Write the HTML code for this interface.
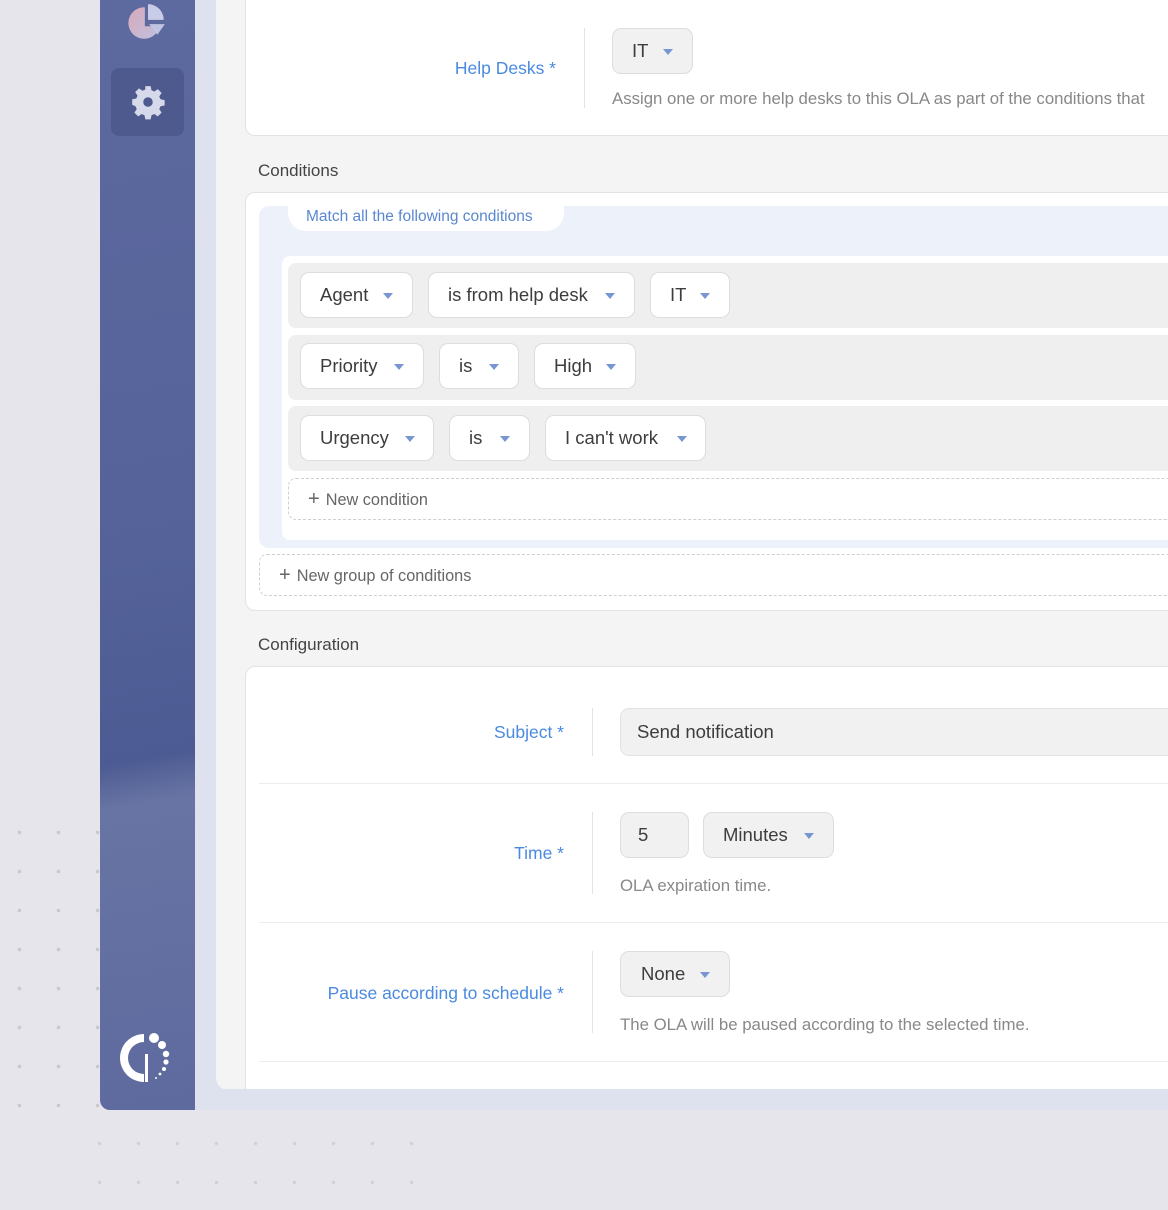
<!DOCTYPE html>
<html><head><meta charset="utf-8"><style>
*{margin:0;padding:0;box-sizing:border-box}
body{width:1168px;height:1210px;overflow:hidden;background:#e5e5eb;font-family:"Liberation Sans",sans-serif;position:relative}
.a{position:absolute}
.dots{background-image:radial-gradient(circle,#c8c8d0 1.6px,transparent 2px);background-size:39px 39px}
.side{left:100px;top:0;width:96px;height:1110px;border-bottom-left-radius:10px;background:linear-gradient(170deg,#5d6a9f 0%,#55629a 50%,#4c5b93 68%,#6874a3 72%,#5e6a9e 100%)}
.band{left:195px;top:0;width:973px;height:1110px;background:#dde2ee}
.panel{left:216px;top:0;width:952px;height:1090px;background:#f4f4f5;border-bottom-left-radius:12px}
.card{background:#fff;border:1px solid #e2e2e4;border-radius:10px;border-right:none;border-top-right-radius:0;border-bottom-right-radius:0}
.lbl{color:#4a8ae0;font-size:17.5px;text-align:right}
.desc{color:#888;font-size:16.8px;white-space:nowrap}
.vdiv{width:1px;background:#e4e4e4}
.hd{color:#444;font-size:17px}
.pill{position:absolute;height:46px;background:#fff;border:1px solid #ddd;border-radius:9px;font-size:18.5px;color:#3d3d3d;line-height:44px;white-space:nowrap}
.pill.g{background:#f1f1f1}
.pill span{position:absolute}
.car{position:absolute;top:20px;width:0;height:0;border-left:5px solid transparent;border-right:5px solid transparent;border-top:6px solid #7896d3}
.row{position:absolute;left:288px;width:880px;height:65px;background:#efefef;border-top-left-radius:8px;border-bottom-left-radius:8px}
.dot{border:1px dashed #cfcfcf;border-right:none;border-radius:8px 0 0 8px;background:#fff;color:#666;font-size:16.3px}
</style></head><body>
<div class="a dots" style="left:0;top:813px;width:120px;height:300px;background-position:0 0"></div>
<div class="a dots" style="left:80px;top:1124px;width:340px;height:80px;background-position:0 0;opacity:.7"></div>
<div class="a side"></div>
<div class="a band"></div>
<div class="a panel"></div>

<!-- sidebar icons -->
<svg class="a" style="left:127px;top:2px" width="42" height="40" viewBox="0 0 40 38">
<defs><linearGradient id="pg" x1="0" y1="0" x2="1" y2="1"><stop offset="0" stop-color="#e7b0bd"/><stop offset="1" stop-color="#c9cbe6"/></linearGradient></defs>
<path d="M17 5 A15 15 0 1 0 31 23 L17 23 Z" fill="url(#pg)" opacity=".9"/>
<path d="M20 2 A15 15 0 0 1 35 17 L20 17 Z" fill="#c8cce6"/>
<path d="M21 21 L36 21 L29 31 Z" fill="#c0c5e2"/>
</svg>
<div class="a" style="left:111px;top:68px;width:73px;height:68px;border-radius:8px;background:#4e5a8e"></div>
<svg class="a" style="left:129px;top:83px" width="38" height="38" viewBox="0 0 24 24">
<path fill="#d6d9ea" d="M10.3 2h3.4l.5 2.6 1.8.8 2.2-1.5 2.4 2.4-1.5 2.2.8 1.8 2.6.5v3.4l-2.6.5-.8 1.8 1.5 2.2-2.4 2.4-2.2-1.5-1.8.8-.5 2.6h-3.4l-.5-2.6-1.8-.8-2.2 1.5-2.4-2.4 1.5-2.2-.8-1.8L2 13.7v-3.4l2.6-.5.8-1.8-1.5-2.2 2.4-2.4 2.2 1.5 1.8-.8zM12 9a3 3 0 1 0 0 6 3 3 0 0 0 0-6z"/>
</svg>
<svg class="a" style="left:120px;top:1030px" width="56" height="56" viewBox="0 0 56 56">
<path d="M24 4 A24 24 0 0 0 24 52 L24 44 A14 14 0 0 1 24 12 Z" fill="#fff"/>
<rect x="25" y="24" width="3" height="28" fill="#fff"/>
<circle cx="34" cy="8" r="5" fill="#fff"/><circle cx="42" cy="15" r="4" fill="#fff"/>
<circle cx="46" cy="24" r="3.2" fill="#fff"/><circle cx="46" cy="32" r="2.6" fill="#fff"/>
<circle cx="44" cy="39" r="2" fill="#fff"/><circle cx="40" cy="44" r="1.4" fill="#fff"/><circle cx="36" cy="48" r="1" fill="#fff"/>
</svg>

<!-- card1 -->
<div class="a card" style="left:245px;top:-12px;width:923px;height:148px"></div>
<div class="a lbl" style="left:300px;top:58px;width:256px">Help Desks *</div>
<div class="a vdiv" style="left:584px;top:28px;height:80px"></div>
<div class="pill g" style="left:612px;top:28px;width:81px"><span style="left:19px">IT</span><i class="car" style="left:50px"></i></div>
<div class="a desc" style="left:612px;top:89px">Assign one or more help desks to this OLA as part of the conditions that</div>

<div class="a hd" style="left:258px;top:161px">Conditions</div>
<div class="a card" style="left:245px;top:192px;width:923px;height:419px"></div>
<div class="a" style="left:259px;top:206px;width:909px;height:342px;background:#edf1f9;border-radius:10px 0 0 10px"></div>
<div class="a" style="left:288px;top:200px;width:276px;height:31px;background:#fff;border-radius:0 0 18px 18px"></div>
<div class="a" style="left:306px;top:208px;color:#5a87d0;font-size:15.5px">Match all the following conditions</div>
<div class="a" style="left:282px;top:256px;width:886px;height:284px;background:#fff;border-radius:8px 0 0 8px"></div>
<div class="row" style="top:263px"></div>
<div class="row" style="top:335px"></div>
<div class="row" style="top:406px"></div>
<div class="pill" style="left:300px;top:272px;width:113px"><span style="left:19px">Agent</span><i class="car" style="left:82px"></i></div>
<div class="pill" style="left:428px;top:272px;width:207px"><span style="left:19px">is from help desk</span><i class="car" style="left:176px"></i></div>
<div class="pill" style="left:650px;top:272px;width:80px"><span style="left:19px">IT</span><i class="car" style="left:49px"></i></div>
<div class="pill" style="left:300px;top:343px;width:124px"><span style="left:19px">Priority</span><i class="car" style="left:93px"></i></div>
<div class="pill" style="left:439px;top:343px;width:80px"><span style="left:19px">is</span><i class="car" style="left:49px"></i></div>
<div class="pill" style="left:534px;top:343px;width:102px"><span style="left:19px">High</span><i class="car" style="left:71px"></i></div>
<div class="pill" style="left:300px;top:415px;width:134px"><span style="left:19px">Urgency</span><i class="car" style="left:104px"></i></div>
<div class="pill" style="left:449px;top:415px;width:81px"><span style="left:19px">is</span><i class="car" style="left:50px"></i></div>
<div class="pill" style="left:545px;top:415px;width:161px"><span style="left:19px">I can't work</span><i class="car" style="left:131px"></i></div>
<div class="a dot" style="left:288px;top:478px;width:880px;height:42px;line-height:40px;padding-left:19px"><span style="font-size:20px;margin-right:6px">+</span>New condition</div>
<div class="a dot" style="left:259px;top:554px;width:909px;height:42px;line-height:40px;padding-left:19px"><span style="font-size:20px;margin-right:6px">+</span>New group of conditions</div>

<div class="a hd" style="left:258px;top:635px">Configuration</div>
<div class="a card" style="left:245px;top:666px;width:923px;height:440px;border-bottom:none;border-bottom-left-radius:0"></div>
<div class="a lbl" style="left:300px;top:722px;width:264px">Subject *</div>
<div class="a vdiv" style="left:592px;top:708px;height:48px"></div>
<div class="a" style="left:620px;top:708px;width:548px;height:48px;background:#f1f1f1;border:1px solid #e2e2e2;border-right:none;border-radius:9px 0 0 9px;font-size:18.5px;color:#3d3d3d;line-height:46px;padding-left:16px">Send notification</div>
<div class="a" style="left:259px;top:783px;width:909px;height:1px;background:#ececec"></div>
<div class="a lbl" style="left:300px;top:843px;width:264px">Time *</div>
<div class="a vdiv" style="left:592px;top:812px;height:82px"></div>
<div class="pill g" style="left:620px;top:812px;width:69px"><span style="left:17px">5</span></div>
<div class="pill g" style="left:703px;top:812px;width:131px"><span style="left:19px">Minutes</span><i class="car" style="left:100px"></i></div>
<div class="a desc" style="left:620px;top:876px">OLA expiration time.</div>
<div class="a" style="left:259px;top:922px;width:909px;height:1px;background:#ececec"></div>
<div class="a lbl" style="left:300px;top:983px;width:264px">Pause according to schedule *</div>
<div class="a vdiv" style="left:592px;top:951px;height:82px"></div>
<div class="pill g" style="left:620px;top:951px;width:110px"><span style="left:20px">None</span><i class="car" style="left:79px"></i></div>
<div class="a desc" style="left:620px;top:1015px">The OLA will be paused according to the selected time.</div>
<div class="a" style="left:259px;top:1061px;width:909px;height:1px;background:#ececec"></div>
<div class="a" style="left:216px;top:1089px;width:952px;height:21px;background:#dde2ee"></div>
</body></html>
